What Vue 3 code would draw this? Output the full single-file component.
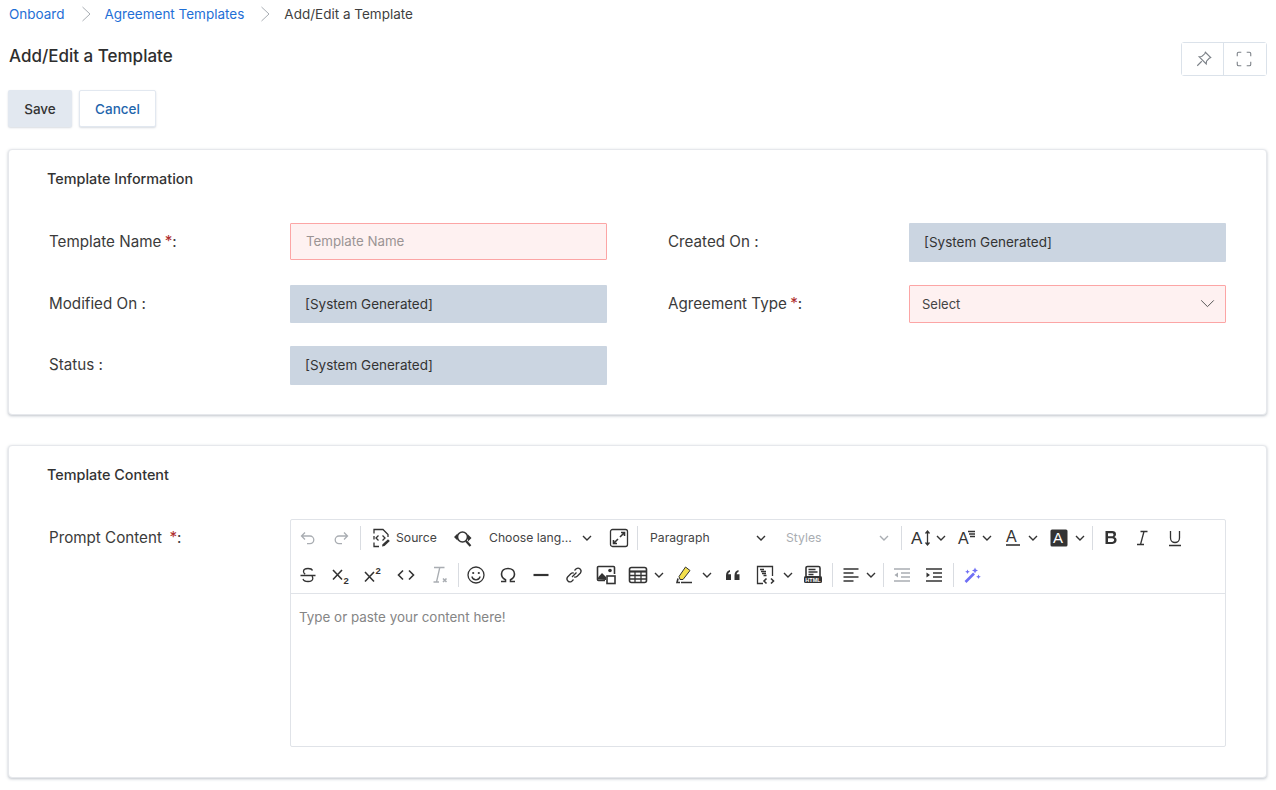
<script setup>
const ICONS = {
  undo: '<path d="M7 4.500 3.500 8 7 11.500M3.500 8H12a3.800 3.800 0 0 1 0 7.600H9" class="l"/>',
  redo: '<path d="M13 4.500 16.500 8 13 11.500M16.500 8H8a3.800 3.800 0 0 0 0 7.600h3" class="l"/>',
  source: '<path d="M3 5.500V1.500h9l5 5V9M3 8v3.500M3 14.500v4h5" class="s"/><path d="M7.500 7.500 5 10l2.500 2.500M11.500 7.500 14 10l-2.500 2.500" class="s"/><path d="m11 18.500.6-2.300 5.400-5 1.800 1.800-5.300 5z" class="f"/>',
  find: '<circle cx="10.500" cy="9" r="5" class="s t"/><path d="m14 13 4.500 5" class="s th"/><path d="M2 9 5.500 5.500v7zM19.500 10 16 13.500v-7z" class="f"/>',
  full: '<rect x="1.500" y="1.500" width="17" height="17" rx="2" class="s"/><path d="M11 9l4-4M12 4.500h3.500V8M9 11l-4 4M8 15.500H4.500V12" class="s t"/>',
  size: '<text x="0" y="16" class="glyph" font-size="17">A</text><path d="M16.500 3v14M14.500 5.500l2-2.500 2 2.500M14.500 14.500l2 2.500 2-2.500" class="s"/>',
  family: '<text x="2" y="16" class="glyph" font-size="16">A</text><path d="M12 3.500h7M13 6h6M14 8.500h5" class="s"/>',
  color: '<text x="3" y="14" class="glyph" font-size="16">A</text><path d="M3 17h14" class="s t"/>',
  bgcolor: '<rect x="1.500" y="1.500" width="17" height="17" rx="1.500" class="f"/><text x="4" y="15" class="glyph inv" font-size="15">A</text>',
  bold: '<path d="M4.500 3h6.800c2.300 0 3.700 1.200 3.700 3.200 0 1.400-.8 2.400-1.900 2.800 1.500.3 2.500 1.500 2.500 3.100 0 2.300-1.600 3.900-4.200 3.900H4.500zM7 5.200v3h4c1 0 1.500-.6 1.500-1.500s-.6-1.500-1.500-1.500zm0 5.100v3.600h4.100c1.200 0 2-.7 2-1.800s-.8-1.800-2-1.800z" class="f"/>',
  italic: '<path d="M8.500 3.500h7M5 16.500h7M12 3.500 8.500 16.500" class="s"/>',
  underline: '<path d="M5.500 3v7a4.500 4.500 0 0 0 9 0V3M4 17.500h12" class="s"/>',
  strike: '<path d="M14.500 5.500C14 4 12.500 3.500 10 3.500c-3 0-4.500 1.200-4.500 3 0 1.200.6 2 1.700 2.600M5 14c.5 1.700 2.300 2.500 5 2.500 3 0 4.800-1.200 4.800-3.100 0-.9-.3-1.600-.9-2.100M2.500 10.500h15" class="s"/>',
  sub: '<path d="M2 5l9 9.500M11 5l-9 9.500" class="s t"/><text x="12.500" y="18.500" class="glyph b" font-size="9.500">2</text>',
  sup: '<path d="M2 7l9 9.500M11 7l-9 9.500" class="s t"/><text x="12.500" y="9" class="glyph b" font-size="9.500">2</text>',
  code: '<path d="M7 5.500 2.500 10 7 14.500M13 5.500l4.500 4.500-4.500 4.500" class="s t"/>',
  clear: '<path d="M5 2.500h10.500M10.800 2.500l-3.300 14.500M4.500 17h5.500" class="l"/><path d="m14 13.500 3.500 3.500M17.500 13.500 14 17" class="l t"/>',
  smile: '<circle cx="10" cy="10" r="8" class="s"/><circle cx="7.200" cy="8" r="1.100" class="f"/><circle cx="12.800" cy="8" r="1.100" class="f"/><path d="M5.800 11.500c.8 2.300 2.300 3.400 4.200 3.400s3.400-1.100 4.200-3.400" class="s"/>',
  omega: '<path d="M3 16.500h4.500v-1.700C5 13.500 3.500 11.300 3.500 9c0-3.500 2.900-5.500 6.500-5.500s6.500 2 6.500 5.500c0 2.300-1.500 4.500-4 5.800v1.700H17" class="s t"/>',
  hr: '<path d="M2.500 10h15" class="s th"/>',
  link: '<path d="m8 12 4.500-4.500M10.500 5.500l1.700-1.700a3 3 0 0 1 4.200 4.200l-3.200 3.200a3 3 0 0 1-3 .7M9.500 14.500l-1.700 1.700a3 3 0 0 1-4.200-4.200l3.200-3.200a3 3 0 0 1 3-.7" class="s"/>',
  image: '<path d="M9 15.500H2.500a1 1 0 0 1-1-1v-12a1 1 0 0 1 1-1h15a1 1 0 0 1 1 1V9" class="s t"/><path d="M2 14.500v-2l4-4.500 4 4v3z" class="f"/><circle cx="14" cy="5.500" r="1.800" class="f"/><rect x="11" y="11" width="8" height="7.500" class="s t"/>',
  table: '<rect x="1.500" y="2.500" width="17" height="15" rx="2" class="s t"/><path d="M1.500 6.500h17" class="s th"/><path d="M1.500 10.500h17M1.500 14h17M7 6v11.500M13 6v11.500" class="s"/>',
  marker: '<path d="M11.500 2 16 5.500 9 14.500H6L5 11.500z" class="y"/><path d="M4 13.500 3 17.500h3M7 17.500h11" class="s t"/>',
  quote: '<path d="M3 15v-4.500c0-3 1.500-5 4-5.500v2c-1 .3-1.800 1-1.800 2.200H8V15zM11.500 15v-4.500c0-3 1.500-5 4-5.500v2c-1 .3-1.800 1-1.800 2.200h2.800V15z" class="f"/>',
  snippet: '<path d="M8 18.500H2.500v-17h15V11" class="s"/><path d="M5 4.500h4M6 6.500h5M7 8.500h4M8.500 10.500h3" class="s"/><path d="M11.500 13.500 9 16l2.500 2.500M16 13.500l2.500 2.500-2.500 2.500" class="s t"/>',
  html: '<path d="M3 11V3a1.500 1.500 0 0 1 1.500-1.500h11A1.500 1.500 0 0 1 17 3v8" class="s t"/><path d="M5.500 4.500h7M5.500 7h9M5.500 9.500h5" class="s"/><rect x="1" y="11" width="18" height="7" rx="1.500" class="f"/><text x="2.300" y="16.700" class="glyph inv b" font-size="5.500">HTML</text>',
  align: '<path d="M2.500 4h15M2.500 8h10M2.500 12h15M2.500 16h10" class="s t"/>',
  outdent: '<path d="M2 4h16M9 8h9M9 12h9M2 16h16" class="l t"/><path d="M6 7.500v5L2.500 10z" class="lf"/>',
  indent: '<path d="M2 4h16M9 8h9M9 12h9M2 16h16" class="s t"/><path d="M2.500 7.500v5L6 10z" class="f"/>',
  wand: '<path d="m3.500 17 8.500-8.500" class="w"/><path d="M13 2.500l.9 2.100 2.100.9-2.100.9-.9 2.100-.9-2.100-2.100-.9 2.100-.9zM5.500 4.500l.7 1.600 1.600.7-1.600.7-.7 1.600-.7-1.600-1.600-.7 1.600-.7zM16.500 9.500l.7 1.600 1.600.7-1.600.7-.7 1.600-.7-1.600-1.600-.7 1.600-.7z" class="wf"/>',
}

const icon = (name, w = 20, ml = 0) => ({ kind: 'icon', name, w, ml })
const chev = (ml = 0, muted = false) => ({ kind: 'chev', w: 10, ml, muted })
const sep = (w = 6, ml = 0) => ({ kind: 'sep', w, ml })
const label = (text, w, ml = 0, muted = false) => ({ kind: 'text', text, w, ml, muted })

const rowOne = [
  icon('undo', 33),
  icon('redo', 33),
  sep(),
  icon('source', 20, 8),
  label('Source', 53, 5),
  icon('find', 26),
  label('Choose lang…', 84, 14),
  chev(9),
  icon('full', 32, 11),
  sep(5),
  label('Paragraph', 60, 10),
  chev(46),
  label('Styles', 36, 20, true),
  chev(57, true),
  sep(6, 9),
  icon('size', 24, 5),
  chev(3),
  icon('family', 22, 9),
  chev(5),
  icon('color', 20, 11),
  chev(5),
  icon('bgcolor', 20, 11),
  chev(6),
  sep(6, 4),
  icon('bold', 31),
  icon('italic', 32),
  icon('underline', 32, 1),
]

const rowTwo = [
  icon('strike', 33),
  icon('sub', 33),
  icon('sup', 32),
  icon('code', 34),
  icon('clear', 32),
  sep(),
  icon('smile', 30),
  icon('omega', 34),
  icon('hr', 32),
  icon('link', 34),
  icon('image', 30),
  icon('table', 20, 7),
  chev(6),
  icon('marker', 20, 10),
  chev(8),
  icon('quote', 20, 11),
  icon('snippet', 20, 12),
  chev(8),
  icon('html', 20, 10),
  sep(6, 6),
  icon('align', 20, 6),
  chev(5),
  sep(6, 4),
  icon('outdent', 20, 6),
  icon('indent', 20, 12),
  sep(6, 6),
  icon('wand', 20, 6),
]

const toolbarRows = [rowOne, rowTwo]

const itemStyle = (item) => ({ width: `${item.w}px`, marginLeft: `${item.ml}px` })
</script>

<template>
  <div class="page">
    <nav class="breadcrumb">
      <a class="crumb-link">Onboard</a>
      <svg class="crumb-sep" viewBox="0 0 10 16" fill="none"><path d="M1.500 1 9 8l-7.500 7" /></svg>
      <a class="crumb-link">Agreement Templates</a>
      <svg class="crumb-sep" viewBox="0 0 10 16" fill="none"><path d="M1.500 1 9 8l-7.500 7" /></svg>
      <span class="crumb-current">Add/Edit a Template</span>
    </nav>

    <header class="page-header">
      <h1>Add/Edit a Template</h1>
      <div class="view-actions">
        <button class="view-btn" type="button" aria-label="Pin">
          <svg viewBox="0 0 20 20" fill="none">
            <path d="M11.500 2.500 17.500 8.500 15.800 9.200 12.800 12.500 12.500 15.500 4.500 7.500 7.500 7.200 10.800 4.200zM7.500 12.500 2.500 17.500" />
          </svg>
        </button>
        <button class="view-btn" type="button" aria-label="Fullscreen">
          <svg viewBox="0 0 20 20" fill="none">
            <path d="M2.500 7V4a1.500 1.500 0 0 1 1.500-1.500h3M13 2.500h3A1.500 1.500 0 0 1 17.500 4v3M17.500 13v3a1.500 1.500 0 0 1-1.500 1.500h-3M7 17.500H4A1.500 1.500 0 0 1 2.500 16v-3" />
          </svg>
        </button>
      </div>
    </header>

    <div class="form-actions">
      <button class="btn btn-save" type="button">Save</button>
      <button class="btn btn-cancel" type="button">Cancel</button>
    </div>

    <section class="card card-info">
      <h2>Template Information</h2>
      <div class="form-grid">
        <div class="field">
          <label>Template Name <em>*</em>:</label>
          <input class="input input-error" type="text" placeholder="Template Name" />
        </div>
        <div class="field">
          <label>Created On :</label>
          <div class="input input-system">[System Generated]</div>
        </div>
        <div class="field">
          <label>Modified On :</label>
          <div class="input input-system">[System Generated]</div>
        </div>
        <div class="field">
          <label>Agreement Type <em>*</em>:</label>
          <div class="input input-select">
            <span>Select</span>
            <svg viewBox="0 0 16 10" fill="none"><path d="M1 1.500 8 8.500l7-7" /></svg>
          </div>
        </div>
        <div class="field">
          <label>Status :</label>
          <div class="input input-system">[System Generated]</div>
        </div>
      </div>
    </section>

    <section class="card card-content">
      <h2>Template Content</h2>
      <div class="field field-editor">
        <label>Prompt Content &nbsp;<em>*</em>:</label>
        <div class="editor">
          <div class="toolbar">
            <div v-for="(row, r) in toolbarRows" :key="r" class="toolbar-row">
              <template v-for="(item, i) in row" :key="i">
                <span v-if="item.kind === 'icon'" class="tool" :style="itemStyle(item)">
                  <svg viewBox="0 0 20 20" fill="none" v-html="ICONS[item.name]"></svg>
                </span>
                <span v-else-if="item.kind === 'chev'" class="tool" :class="{ muted: item.muted }" :style="itemStyle(item)">
                  <svg class="chev" viewBox="0 0 10 6" fill="none"><path d="M1 1l4 4 4-4" /></svg>
                </span>
                <span v-else-if="item.kind === 'sep'" class="tool" :style="itemStyle(item)">
                  <i class="tool-sep"></i>
                </span>
                <span v-else class="tool-label" :class="{ muted: item.muted }" :style="itemStyle(item)">{{ item.text }}</span>
              </template>
            </div>
          </div>
          <div class="editor-body">Type or paste your content here!</div>
        </div>
      </div>
    </section>
  </div>
</template>

<style>
html,
body {
  background: #fff;
}
</style>

<style scoped>
.page {
  box-sizing: border-box;
  height: 790px;
  overflow: hidden;
  padding: 5px 9px 0 8px;
  background: #fff;
  color: #333;
  font-family: Inter, "Liberation Sans", sans-serif;
}

.breadcrumb {
  display: flex;
  align-items: center;
  height: 18px;
  margin-left: 1px;
  font-size: 13.500px;
}

.crumb-link {
  color: #1f6fd6;
}

.crumb-current {
  color: #3f3f3f;
}

.crumb-sep {
  width: 10px;
  height: 16px;
  margin: 0 14px 0 16px;
}

.crumb-sep path {
  stroke: #a8adb3;
  stroke-width: 1;
}

.page-header {
  display: flex;
  align-items: flex-start;
  justify-content: space-between;
  height: 34px;
  margin-top: 19px;
  margin-left: 1px;
}

h1 {
  margin: 0;
  font-size: 17px;
  line-height: 28px;
  font-weight: 500;
  color: #2e2e2e;
}

.view-actions {
  display: flex;
  border: 1px solid #dbe2ea;
  border-radius: 3px;
  height: 34px;
  box-sizing: border-box;
}

.view-btn {
  width: 41px;
  padding: 0 0 0 2px;
  background: #fff;
  border: 0;
  display: flex;
  align-items: center;
  justify-content: center;
}

.view-btn + .view-btn {
  border-left: 1px solid #dbe2ea;
  width: 43px;
  padding: 0 2px 0 0;
}

.view-btn svg {
  width: 18px;
  height: 18px;
}

.view-btn path {
  stroke: #7b8087;
  stroke-width: 1.200;
}

.form-actions {
  display: flex;
  gap: 7px;
  margin-top: 14px;
}

.btn {
  box-sizing: border-box;
  height: 37px;
  border-radius: 2px;
  font-family: inherit;
  font-size: 13.500px;
  font-weight: 500;
  padding: 0;
  box-shadow: 0 1px 2px rgba(100, 116, 139, 0.25);
}

.btn-save {
  width: 64px;
  background: #e2e8f0;
  color: #333;
  border: 0;
}

.btn-cancel {
  width: 77px;
  background: #fff;
  color: #1f66ad;
  border: 1px solid #e2e8f0;
}

.card {
  box-sizing: border-box;
  border: 1px solid #e6e8ec;
  border-radius: 4px;
  background: #fff;
  padding: 20px 39px 0;
  box-shadow: 0 1px 3px rgba(71, 85, 105, 0.35);
}

.card-info {
  height: 266px;
  margin-top: 22px;
}

.card-content {
  height: 333px;
  margin-top: 30px;
}

h2 {
  margin: 0 0 0 -1px;
  font-size: 14.400px;
  line-height: 17px;
  font-weight: 500;
  color: #333;
}

.form-grid {
  display: grid;
  grid-template-columns: 558px 558px;
  column-gap: 61px;
  row-gap: 22.500px;
  margin-top: 36px;
}

.field {
  display: flex;
  align-items: center;
  height: 39px;
}

.field label {
  width: 241px;
  margin: 0 0 2px 1px;
  flex-shrink: 0;
  font-size: 15.200px;
  color: #3b3b3b;
}

.field em {
  color: #b03030;
  font-style: normal;
  margin-left: -1px;
}

.input {
  box-sizing: border-box;
  flex-shrink: 0;
  width: 317px;
  height: 38.500px;
  font-family: inherit;
  font-size: 13.500px;
  border-radius: 1px;
  outline: none;
}

.input-error {
  height: 37px;
  margin-top: -3px;
  padding: 0 15px;
  font-size: 13.300px;
  background: #fef1f1;
  border: 1px solid #fca5a5;
  color: #333;
}

.input-error::placeholder {
  color: #9b9494;
  opacity: 1;
}

.input-system {
  display: flex;
  align-items: center;
  padding: 0 15px 1px;
  background: #cbd5e1;
  color: #333;
}

.input-select {
  display: flex;
  align-items: center;
  justify-content: space-between;
  padding: 0 10px 1px 12px;
  font-size: 13px;
  background: #fef1f1;
  border: 1px solid #fca5a5;
  color: #444;
}

.input-select svg {
  width: 15px;
  height: 9px;
}

.input-select path {
  stroke: #555;
  stroke-width: 1.100;
}

.field-editor {
  align-items: flex-start;
  height: auto;
  margin-top: 36px;
}

.field-editor label {
  margin-top: 9px;
}

.editor {
  box-sizing: border-box;
  width: 936px;
  height: 228px;
  border: 1px solid #e0e3e8;
  border-radius: 2px;
  display: flex;
  flex-direction: column;
  flex-shrink: 0;
}

.toolbar {
  height: 75px;
  margin-top: -1px;
  flex-shrink: 0;
  border-bottom: 1px solid #e0e3e8;
  box-sizing: border-box;
}

.toolbar-row {
  display: flex;
  align-items: center;
  height: 37px;
}

.tool {
  display: flex;
  align-items: center;
  justify-content: center;
  flex-shrink: 0;
  height: 24px;
}

.tool svg {
  width: 20px;
  height: 20px;
  overflow: visible;
}

.tool .chev {
  width: 10px;
  height: 6px;
}

.chev path {
  stroke: #333;
  stroke-width: 1.400;
}

.muted .chev path {
  stroke: #a9adb2;
}

.tool-sep {
  display: block;
  width: 1px;
  height: 24px;
  background: #d9dce1;
}

.tool-label {
  flex-shrink: 0;
  font-size: 12.200px;
  white-space: nowrap;
  color: #444;
}

.tool-label.muted {
  color: #a9adb2;
}

.tool :deep(.s) {
  stroke: #333;
  stroke-width: 1.300;
  fill: none;
}

.tool :deep(.s.t) {
  stroke-width: 1.600;
}

.tool :deep(.s.th) {
  stroke-width: 2.200;
}

.tool :deep(.f) {
  fill: #333;
}

.tool :deep(.l) {
  stroke: #a9adb2;
  stroke-width: 1.300;
  fill: none;
}

.tool :deep(.l.t) {
  stroke-width: 1.600;
}

.tool :deep(.lf) {
  fill: #a9adb2;
}

.tool :deep(.y) {
  fill: #f4e04d;
  stroke: #333;
  stroke-width: 1;
}

.tool :deep(.w) {
  stroke: #6f6ff5;
  stroke-width: 2.600;
  fill: none;
}

.tool :deep(.wf) {
  fill: #6f6ff5;
}

.tool :deep(.glyph) {
  font-family: "Liberation Sans", sans-serif;
  fill: #333;
}

.tool :deep(.glyph.inv) {
  fill: #fff;
}

.tool :deep(.glyph.b) {
  font-weight: 700;
}

.editor-body {
  padding: 14px 8px;
  font-size: 13.400px;
  line-height: 18px;
  color: #858585;
}
</style>
